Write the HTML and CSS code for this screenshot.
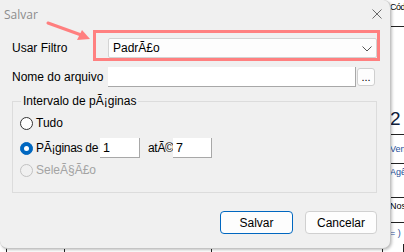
FILE: index.html
```html
<!DOCTYPE html>
<html lang="pt">
<head>
  <meta charset="UTF-8">
  <meta name="viewport" content="width=device-width, initial-scale=1.0">
  <title>Salvar</title>
  <link rel="stylesheet" href="styles.css">
</head>
<body>

  <!-- janela do aplicativo por tras do dialogo -->
  <div class="behind-col">
    <div class="cell cell-head">Códi</div>
    <div class="cell cell-big">2</div>
    <div class="cell cell-blue">Venc</div>
    <div class="cell cell-blue cell-top">Agên</div>
    <div class="cell cell-top cell-noss">Noss</div>
    <div class="cell cell-last">= )</div>
  </div>
  <div class="behind-bottom">
    <span class="col" style="width:7px"></span>
    <span class="col" style="width:58px"></span>
    <span class="col" style="width:147px"></span>
    <span class="col" style="width:171px"></span>
    <span class="col" style="width:21px"></span>
  </div>

  <div class="dialog">

    <div class="titlebar">
      <span class="title">Salvar</span>
      <svg class="close" width="10" height="10" viewBox="0 0 10 10">
        <path d="M0.5 0.5 L9.5 9.5 M9.5 0.5 L0.5 9.5" stroke="#6b6b6b" stroke-width="1" fill="none"/>
      </svg>
    </div>

    <div class="content">

      <div class="row row-filter">
        <label class="label">Usar Filtro</label>
        <div class="combo">
          <span>PadrÃ£o</span>
          <svg width="10" height="6" viewBox="0 0 10 6">
            <path d="M0.5 0.5 L5 5 L9.5 0.5" stroke="#555" stroke-width="1" fill="none"/>
          </svg>
        </div>
      </div>

      <div class="row row-name">
        <label class="label">Nome do arquivo</label>
        <div class="field field-name"></div>
        <button class="browse">...</button>
      </div>

      <fieldset class="range">
        <legend>Intervalo de pÃ¡ginas</legend>
        <div class="range-rows">
          <div class="opt opt-all">
            <span class="radio"></span>
            <span>Tudo</span>
          </div>
          <div class="opt opt-pages">
            <span class="radio checked"></span>
            <span class="opt-label">PÃ¡ginas de</span>
            <div class="field field-num">1</div>
            <span class="to-label">atÃ©</span>
            <div class="field field-num">7</div>
          </div>
          <div class="opt opt-sel disabled">
            <span class="radio"></span>
            <span>SeleÃ§Ã£o</span>
          </div>
        </div>
      </fieldset>

      <div class="actions">
        <button class="btn btn-default">Salvar</button>
        <button class="btn">Cancelar</button>
      </div>

    </div>

    <!-- marcacao em destaque por cima do campo -->
    <div class="highlight"></div>
    <svg class="pointer" width="50" height="24" viewBox="0 0 50 24">
      <path d="M2 2 L38 15" stroke="#ff7f7f" stroke-width="3" stroke-linecap="round" fill="none"/>
      <path d="M44 18 L31 19 L36 9 Z" fill="#ff7f7f"/>
    </svg>

  </div>

</body>
</html>
```

FILE: styles.css
```css
* {
  box-sizing: border-box;
  margin: 0;
  padding: 0;
}

body {
  width: 404px;
  height: 252px;
  position: relative;
  overflow: hidden;
  background: #ffffff;
  font-family: "Liberation Sans", Arial, sans-serif;
  font-size: 12px;
  color: #000;
}

/* app behind */

.behind-col {
  position: absolute;
  left: 388px;
  top: 0;
  width: 16px;
  display: flex;
  flex-direction: column;
  font-size: 9px;
  white-space: nowrap;
  overflow: hidden;
}

.cell {
  border-bottom: 1px solid #222;
  padding-left: 2px;
  display: flex;
  align-items: center;
}

.cell-head {
  height: 27px;
  align-items: flex-start;
  padding-top: 2px;
  letter-spacing: -0.5px;
}

.cell-big {
  height: 108px;
  font-size: 19px;
  align-items: flex-end;
  padding-bottom: 4px;
  color: #10213a;
}

.cell-blue {
  height: 29px;
  color: #1f4f9a;
}

.cell-top {
  height: 34px;
  align-items: flex-start;
  padding-top: 3px;
}

.cell-noss {
  height: 25px;
  color: #000;
}

.cell-last {
  height: 20px;
  border-bottom: none;
  color: #1f4f9a;
}

.behind-bottom {
  position: absolute;
  left: 0;
  bottom: 0;
  height: 8px;
  display: flex;
}

.behind-bottom .col {
  height: 100%;
  border-right: 1px solid #222;
}

/* dialog */

.dialog {
  position: absolute;
  left: 0;
  top: 0;
  width: 391px;
  height: 249px;
  background: #f0f0f0;
  border: 1px solid #c4c4c4;
  border-top: none;
  border-left: none;
  border-radius: 0 8px 8px 8px;
  box-shadow: 1px 1px 3px rgba(0, 0, 0, 0.25);
}

.titlebar {
  height: 30px;
  display: flex;
  align-items: center;
  justify-content: space-between;
  padding: 0 8px 2px 4px;
}

.title {
  font-family: "Open Sans", "Liberation Sans", sans-serif;
  font-size: 12px;
  color: #8c8c8c;
}

.content {
  padding: 8px 0 0 12px;
}

.row {
  display: flex;
  align-items: center;
}

.label {
  width: 96px;
  white-space: nowrap;
}

.combo {
  width: 269px;
  height: 20px;
  background: #fdfdfd;
  border: 1px solid #d3d3d3;
  border-radius: 2px;
  display: flex;
  align-items: center;
  justify-content: space-between;
  padding: 0 4px 0 4px;
}

.combo svg {
  margin-top: 1px;
}

.row-name {
  margin-top: 9px;
}

.field {
  background: #fff;
  border-right: 1px solid #a8a8a8;
  border-bottom: 1px solid #a8a8a8;
  height: 20px;
}

.field-name {
  width: 248px;
}

.browse {
  width: 18px;
  height: 18px;
  margin-left: 1px;
  background: #fdfdfd;
  border: 1px solid #cfcfcf;
  border-radius: 3px;
  font-family: inherit;
  font-size: 11px;
  line-height: 12px;
  color: #000;
}

/* page range */

.range {
  margin-top: 7px;
  width: 365px;
  border: 1px solid #dcdcdc;
  padding: 0 0 0 7px;
}

.range legend {
  margin-left: 1px;
  padding: 0 2px;
  line-height: 14px;
}

.range-rows {
  display: flex;
  flex-direction: column;
  padding: 7px 0 14px;
}

.opt {
  display: flex;
  align-items: center;
  height: 16px;
  white-space: nowrap;
}

.opt-pages {
  height: 20px;
  margin-top: 7px;
}

.opt-sel {
  margin-top: 4px;
}

.radio {
  width: 13px;
  height: 13px;
  border-radius: 50%;
  border: 1px solid #333;
  background: #fff;
  margin-right: 3px;
  flex-shrink: 0;
  position: relative;
}

.radio.checked {
  background: #0067c0;
  border-color: #0067c0;
}

.radio.checked::after {
  content: "";
  position: absolute;
  left: 3px;
  top: 3px;
  width: 5px;
  height: 5px;
  border-radius: 50%;
  background: #fff;
}

.disabled {
  color: #a3a3a3;
}

.disabled .radio {
  border-color: #c2c2c2;
  background: transparent;
}

.opt-label {
  width: 64px;
  letter-spacing: -0.3px;
}

.field-num {
  width: 40px;
  padding: 3px 0 0 3px;
  font-size: 12.5px;
}

.to-label {
  width: 33px;
  padding-left: 8px;
  letter-spacing: -0.3px;
}

.opt-pages .field-num:last-child {
  width: 39px;
}

/* buttons */

.actions {
  display: flex;
  justify-content: flex-end;
  gap: 12px;
  margin-top: 18px;
  padding-right: 13px;
}

.btn {
  width: 72px;
  height: 23px;
  background: #fdfdfd;
  border: 1px solid #d0d0d0;
  border-radius: 4px;
  font-family: inherit;
  font-size: 12px;
  color: #000;
}

.btn-default {
  width: 73px;
  border: 1.5px solid #0067c0;
}

/* annotation */

.highlight {
  position: absolute;
  left: 93px;
  top: 30px;
  width: 287px;
  height: 31px;
  border: 3px solid #ff8080;
}

.pointer {
  position: absolute;
  left: 46px;
  top: 21px;
}
```
